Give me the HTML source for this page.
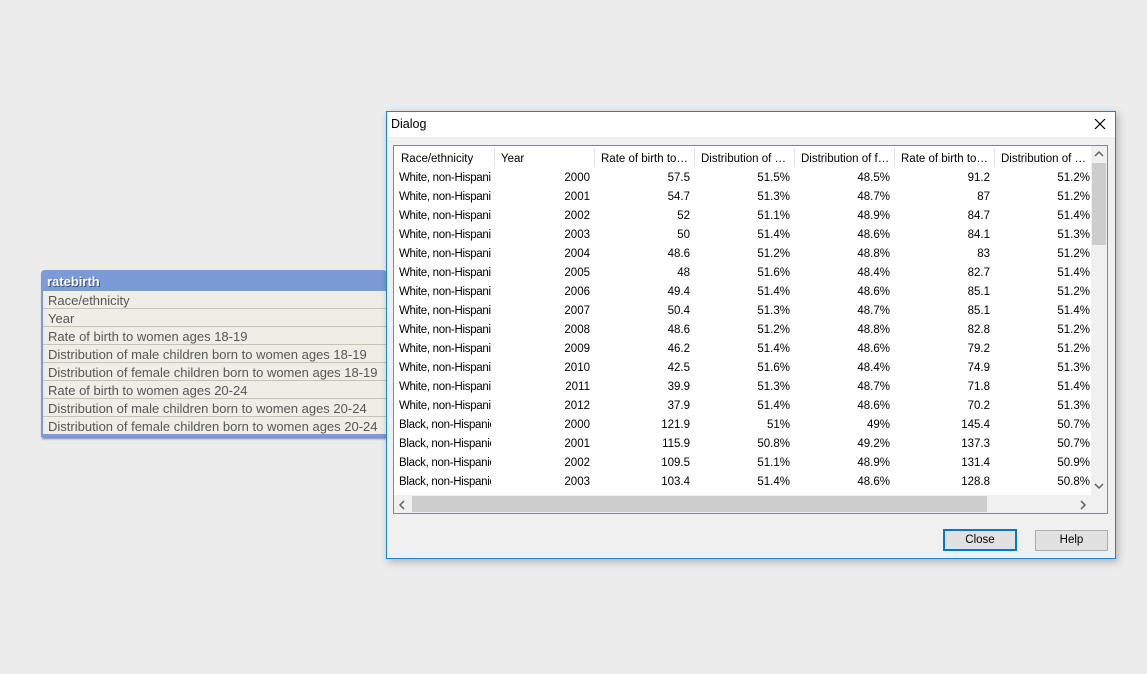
<!DOCTYPE html>
<html><head><meta charset="utf-8"><style>
body{margin:0;width:1147px;height:674px;background:#ececec;position:relative;overflow:hidden;font-family:"Liberation Sans",sans-serif;}
.abs{position:absolute;}
#panel{left:41px;top:270px;width:346px;height:167px;background:#7b9bd6;border-radius:4px 4px 0 0;box-shadow:1px 2px 2px #7a8aa8;}
#panel .t{left:6px;top:4px;color:#fff;font-weight:bold;font-size:13px;text-shadow:1px 1px 0 #3a4f80;}
#panel .rows{left:2px;top:21px;width:344px;height:143px;background:#efeee6;}
#panel .r{position:absolute;left:0;width:344px;height:17px;border-bottom:1px solid #c4c3b8;font-size:13px;color:#555;line-height:19px;text-indent:5px;white-space:nowrap;overflow:hidden;}
#dlg{left:386px;top:111px;width:728px;height:446px;background:#f0f0f0;border:1px solid #1883d7;box-shadow:2px 3px 8px rgba(0,0,0,.25);}
#tb{left:0;top:0;width:728px;height:25px;background:#fff;}
#tb .tt{left:4px;top:5px;font-size:12.5px;color:#000;}
#frame{left:6px;top:33px;width:713px;height:367px;border:1px solid #828790;background:#fff;overflow:hidden;}
.c{position:absolute;font-size:11.5px;color:#000;white-space:nowrap;overflow:hidden;height:19px;line-height:19px;}
.hd{position:absolute;top:2px;height:19px;line-height:23px;font-size:11.5px;border-right:1px solid #e5e5e5;background:#fff;padding-left:6px;box-sizing:border-box;white-space:nowrap;overflow:hidden;}
.btn{position:absolute;top:418px;height:19px;width:71px;border:1px solid #adadad;background:#e1e1e1;font-size:11.5px;text-align:center;line-height:19px;}
</style></head><body>
<div id="panel" class="abs">
<div class="abs t">ratebirth</div>
<div class="abs rows">
<div class="r" style="top:0">Race/ethnicity</div>
<div class="r" style="top:18px">Year</div>
<div class="r" style="top:36px">Rate of birth to women ages 18-19</div>
<div class="r" style="top:54px">Distribution of male children born to women ages 18-19</div>
<div class="r" style="top:72px">Distribution of female children born to women ages 18-19</div>
<div class="r" style="top:90px">Rate of birth to women ages 20-24</div>
<div class="r" style="top:108px">Distribution of male children born to women ages 20-24</div>
<div class="r" style="top:126px;border-bottom:none">Distribution of female children born to women ages 20-24</div>
</div></div>
<div id="dlg" class="abs">
<div id="tb" class="abs"><div class="abs tt">Dialog</div>
<svg class="abs" style="left:707px;top:6px" width="12" height="12"><path d="M1 1L11 11M11 1L1 11" stroke="#000" stroke-width="1.2"/></svg></div>
<div id="frame" class="abs">
<div id="tbl" class="abs" style="left:0;top:0;width:697px;height:349px;overflow:hidden"></div>
<div class="abs" style="left:697px;top:0;width:16px;height:349px;background:#f0f0f0"></div>
<div class="abs" style="left:698px;top:17px;width:14px;height:82px;background:#cdcdcd"></div>
<svg class="abs" style="left:699px;top:4px" width="12" height="8"><path d="M2 6L6 2L10 6" stroke="#606060" stroke-width="1.5" fill="none"/></svg>
<svg class="abs" style="left:699px;top:336px" width="12" height="8"><path d="M2 2L6 6L10 2" stroke="#606060" stroke-width="1.5" fill="none"/></svg>
<div class="abs" style="left:0;top:349px;width:697px;height:18px;background:#f0f0f0"></div>
<div class="abs" style="left:18px;top:350px;width:575px;height:16px;background:#cdcdcd"></div>
<svg class="abs" style="left:4px;top:353px" width="8" height="12"><path d="M6 2L2 6L6 10" stroke="#606060" stroke-width="1.5" fill="none"/></svg>
<svg class="abs" style="left:685px;top:353px" width="8" height="12"><path d="M2 2L6 6L2 10" stroke="#606060" stroke-width="1.5" fill="none"/></svg>
<div class="abs" style="left:697px;top:349px;width:16px;height:18px;background:#f0f0f0"></div>
</div>
<div class="btn" style="left:556px;border:2px solid #0078d7;top:417px;height:18px;width:70px">Close</div>
<div class="btn" style="left:648px">Help</div>
</div>
<script>
var hd=["Race/ethnicity","Year","Rate of birth to…","Distribution of …","Distribution of f…","Rate of birth to…","Distribution of …"];
var W="White, non-Hispani",B="Black, non-Hispanic";
var d=[[W,2000,57.5,"51.5%","48.5%",91.2,"51.2%"],[W,2001,54.7,"51.3%","48.7%",87,"51.2%"],[W,2002,52,"51.1%","48.9%",84.7,"51.4%"],[W,2003,50,"51.4%","48.6%",84.1,"51.3%"],[W,2004,48.6,"51.2%","48.8%",83,"51.2%"],[W,2005,48,"51.6%","48.4%",82.7,"51.4%"],[W,2006,49.4,"51.4%","48.6%",85.1,"51.2%"],[W,2007,50.4,"51.3%","48.7%",85.1,"51.4%"],[W,2008,48.6,"51.2%","48.8%",82.8,"51.2%"],[W,2009,46.2,"51.4%","48.6%",79.2,"51.2%"],[W,2010,42.5,"51.6%","48.4%",74.9,"51.3%"],[W,2011,39.9,"51.3%","48.7%",71.8,"51.4%"],[W,2012,37.9,"51.4%","48.6%",70.2,"51.3%"],[B,2000,121.9,"51%","49%",145.4,"50.7%"],[B,2001,115.9,"50.8%","49.2%",137.3,"50.7%"],[B,2002,109.5,"51.1%","48.9%",131.4,"50.9%"],[B,2003,103.4,"51.4%","48.6%",128.8,"50.8%"],["Black, non-Hispanic","","","","","",""]];
var h="";var x0=1;
for(var i=0;i<7;i++){h+='<div class="hd" style="left:'+(x0+i*100)+'px;width:100px">'+hd[i]+'</div>';}
for(var r=0;r<d.length;r++){var y=23+r*19;
 h+='<div class="c" style="left:5px;top:'+y+'px;width:92px;letter-spacing:-0.3px">'+d[r][0]+'</div>';
 for(var c=1;c<7;c++){h+='<div class="c" style="left:'+(x0+c*100)+'px;top:'+y+'px;width:95px;text-align:right">'+d[r][c]+'</div>';}
}
document.getElementById('tbl').innerHTML=h;
</script>
</body></html>
